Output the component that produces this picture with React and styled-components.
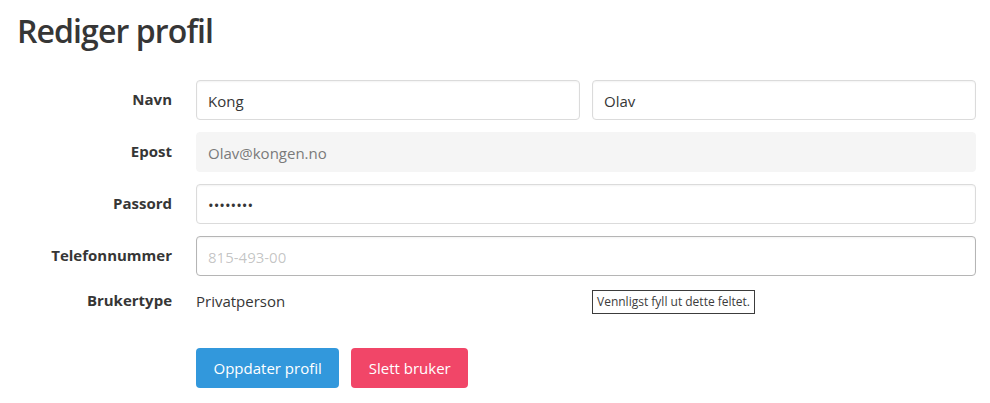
import React from "react";
import styled, { createGlobalStyle } from "styled-components";

const GlobalStyle = createGlobalStyle`
  body {
    margin: 0;
    background: #ffffff;
    font-family: "Open Sans", "Noto Sans", sans-serif;
    color: #4a4a4a;
    font-size: 15px;
  }
`;

const Page = styled.div`
  padding: 13px 14px 0 17px;
`;

const Title = styled.h1`
  margin: 0 0 31px;
  font-size: 32px;
  font-weight: 600;
  letter-spacing: -0.9px;
  line-height: 36px;
  color: #363636;
`;

const Row = styled.div`
  display: grid;
  grid-template-columns: 155px 1fr;
  column-gap: 24px;
  margin-bottom: ${(p) => p.$gap || 12}px;
`;

const Label = styled.label`
  text-align: right;
  font-weight: 700;
  color: #363636;
  line-height: 24px;
  padding-top: ${(p) => (p.$plain ? 0 : 7)}px;
`;

const Fields = styled.div`
  position: relative;
  display: flex;
  gap: 12px;
`;

const Input = styled.input`
  flex: 1;
  min-width: 0;
  height: 40px;
  box-sizing: border-box;
  padding: 1px 11px 0;
  font-family: inherit;
  font-size: 15px;
  color: #363636;
  background: ${(p) => (p.disabled ? "#f5f5f5" : "#ffffff")};
  border: 1px solid ${(p) => (p.disabled ? "#f5f5f5" : p.$hover ? "#b5b5b5" : "#dbdbdb")};
  border-radius: 4px;
  box-shadow: ${(p) => (p.disabled ? "none" : "inset 0 1px 2px rgba(10, 10, 10, 0.05)")};
  outline: none;

  &:disabled {
    color: #7a7a7a;
    -webkit-text-fill-color: #7a7a7a;
  }

  &::placeholder {
    color: rgba(54, 54, 54, 0.3);
  }
`;

const Value = styled.div`
  line-height: 24px;
  padding-top: 1px;
  color: #363636;
`;

const Tooltip = styled.div`
  position: absolute;
  left: 396px;
  top: 2px;
  padding: 3px 4px 4px;
  border: 1px solid #3c3c3c;
  background: #ffffff;
  font-size: 12px;
  line-height: 15px;
  color: #3c3c3c;
  white-space: nowrap;
`;

const Button = styled.button`
  height: 40px;
  padding: 0 16.5px;
  border: 1px solid transparent;
  border-radius: 4px;
  font-family: inherit;
  font-size: 15px;
  color: #ffffff;
  background: ${(p) => p.$bg};
  cursor: pointer;
`;

export default function App() {
  return (
    <>
      <GlobalStyle />
      <Page>
        <Title>Rediger profil</Title>

        <Row>
          <Label>Navn</Label>
          <Fields>
            <Input defaultValue="Kong" />
            <Input defaultValue="Olav" />
          </Fields>
        </Row>

        <Row>
          <Label>Epost</Label>
          <Fields>
            <Input defaultValue="Olav@kongen.no" disabled />
          </Fields>
        </Row>

        <Row>
          <Label>Passord</Label>
          <Fields>
            <Input type="password" defaultValue="kongolav" />
          </Fields>
        </Row>

        <Row>
          <Label>Telefonnummer</Label>
          <Fields>
            <Input placeholder="815-493-00" $hover />
          </Fields>
        </Row>

        <Row $gap={35}>
          <Label $plain>Brukertype</Label>
          <Fields>
            <Value>Privatperson</Value>
            <Tooltip>Vennligst fyll ut dette feltet.</Tooltip>
          </Fields>
        </Row>

        <Row>
          <span />
          <Fields>
            <Button $bg="#3298dc">Oppdater profil</Button>
            <Button $bg="#f14668">Slett bruker</Button>
          </Fields>
        </Row>
      </Page>
    </>
  );
}
